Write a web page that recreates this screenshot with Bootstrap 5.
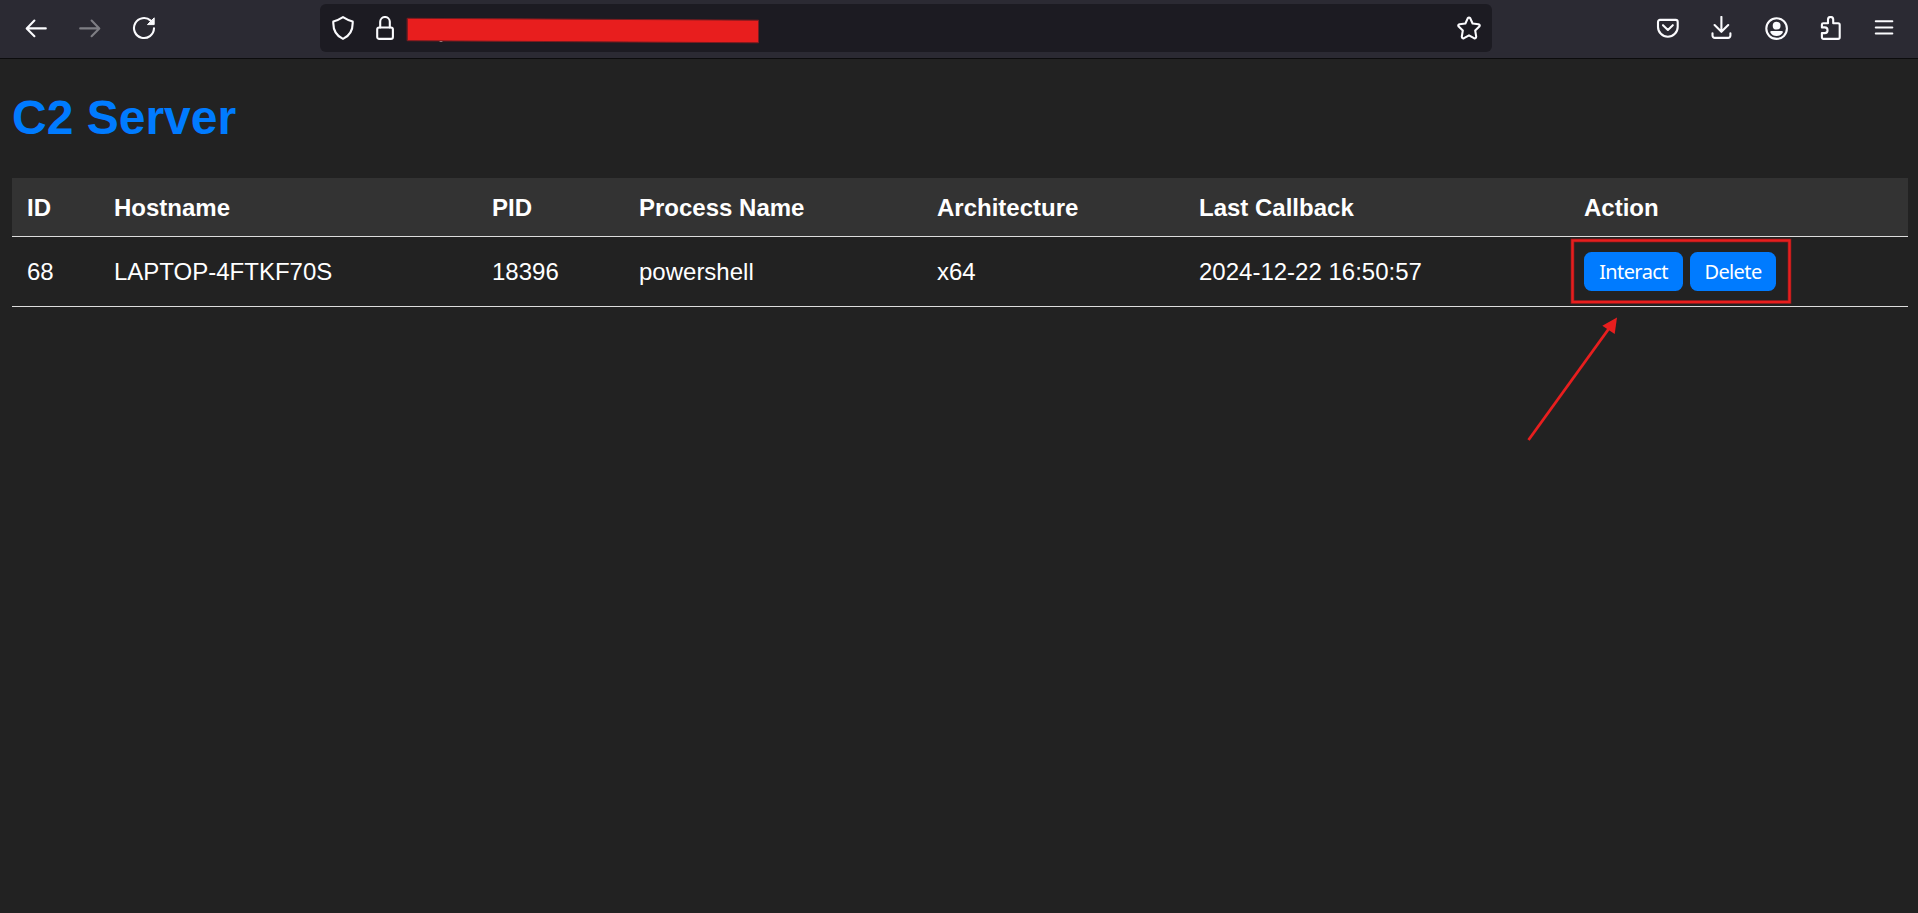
<!DOCTYPE html>
<html lang="en">
<head>
<meta charset="utf-8">
<meta name="viewport" content="width=device-width, initial-scale=1">
<title>C2 Server</title>
<link href="https://cdn.jsdelivr.net/npm/bootstrap@5.3.0/dist/css/bootstrap.min.css" rel="stylesheet">
<style>
  body { background: #222; color: #fff; font-family: "Liberation Sans", Arial, sans-serif; font-size: 24px; min-height: 100vh; }
  .browser-bar { height: 59px; background: #2b2a33; border-bottom: 1px solid #0c0c0d; padding: 4px 22px 6px 24px; }
  .browser-bar svg { width: 24px; height: 24px; display: block; flex: none; fill: none; stroke: #fbfbfe; stroke-width: 2.1; stroke-linecap: round; stroke-linejoin: round; }
  .tool-group { gap: 30px; }
  .url-field { width: 1172px; height: 48px; margin-left: 164px; background: #1c1b22; border-radius: 6px; padding: 0 11px; }
  .url-field .site-icons { gap: 18px; }
  .browser-bar .redaction { width: 356px; height: 32px; margin-left: 8px; stroke: #7c1b20; stroke-width: 1; stroke-linejoin: miter; }
  .page-body { padding: 0 10px 0 12px; }
  h1 { color: #007bff; font-size: 48px; line-height: 56px; font-weight: 700; margin: 0; padding: 31px 0 32px; }
  .agents { --bs-table-bg: transparent; --bs-table-color: #fff; color: #fff; table-layout: fixed; width: 1896px; border-collapse: separate; border-spacing: 0; margin: 0; }
  .agents > :not(caption) > * > * { padding: 0 15px; border-bottom: 1px solid #ddd; white-space: nowrap; line-height: 28px; }
  .agents > thead > tr > th { height: 59px; padding-top: 2px; background: #333; vertical-align: middle; }
  .agents > tbody > tr > td { height: 70px; vertical-align: middle; }
  .btn-agent { --bs-btn-bg: #007bff; --bs-btn-color: #fff; --bs-btn-hover-bg: #0069d9; --bs-btn-hover-color: #fff; border: 0; border-radius: 7.5px; height: 39px; padding: 0; font: 20px/39px "Noto Sans", sans-serif; letter-spacing: -.6px; }
  .btn-interact { width: 99px; }
  .btn-delete { width: 86px; }
  .callout-mark { left: -50px; top: 0; width: 280px; height: 210px; pointer-events: none; fill: none; overflow: visible; }
</style>
</head>
<body>
<nav class="browser-bar d-flex align-items-center">
  <div class="tool-group d-flex">
    <svg viewBox="0 0 24 24"><path d="M10.4 4.6 2.7 12.4l7.7 7.8M2.8 12.4h19"/></svg>
    <svg viewBox="0 0 24 24" opacity=".4"><path d="M13.6 4.6l7.7 7.8-7.7 7.8M21.2 12.4h-19"/></svg>
    <svg viewBox="0 0 24 24"><path d="M22 12.3A10 10 0 1 1 18.7 4.6"/><path d="M22.2 2.2v6.4h-6.4z" fill="#fbfbfe" stroke-width="1"/></svg>
  </div>
  <div class="url-field d-flex align-items-center">
    <div class="site-icons d-flex">
      <svg viewBox="0 0 24 24"><path d="M12 1.1C15 3 18.300 4.700 21.700 5.500C22.100 14 18.800 19.800 12 22.900C5.200 19.800 1.900 14 2.300 5.500C5.700 4.700 9 3 12 1.100z"/></svg>
      <svg viewBox="0 0 24 24"><rect x="4.200" y="11.500" width="15.700" height="11.400" rx="2"/><path d="M7.200 11.500V5.800a4.800 4.800 0 0 1 9.600 0v5.700"/></svg>
    </div>
    <svg class="redaction" viewBox="0 0 356 32"><path d="M35 29.500h2" stroke="#aaa"/><path d="M2.500 6.300 353.500 8.200V30.800L2.500 28.700z" fill="#e81e1e"/></svg>
    <svg class="ms-auto" viewBox="0 0 24 24"><path d="M10.700 2.300Q12 .9 13.300 2.300L15.600 7.500 21.400 8.200Q23.500 8.800 22.300 10.600L18.200 14.600 19.200 20.600Q19 22.800 17 22.200L12 19.400 7 22.200Q5 22.800 4.800 20.600L5.800 14.600 1.700 10.600Q.5 8.800 2.600 8.200L8.400 7.500z"/></svg>
  </div>
  <div class="tool-group d-flex ms-auto">
    <svg viewBox="0 0 24 24"><path d="M4 3.900h15.700a2 2 0 0 1 2 2v5a9.850 9.850 0 0 1-19.700 0v-5a2 2 0 0 1 2-2zM7 9.200l4.900 4.700 4.900-4.700"/></svg>
    <svg viewBox="0 0 24 24"><path d="M11.400.9V15.500M4.600 9l6.800 6.800L18.200 9M2.500 17.200v2.400a2.300 2.300 0 0 0 2.300 2.300h13.300a2.300 2.300 0 0 0 2.300-2.300v-2.400"/></svg>
    <svg viewBox="0 0 24 24"><circle cx="12.600" cy="12.600" r="10.300"/><g fill="#fbfbfe" stroke="none"><circle cx="12.600" cy="9.700" r="3.900"/><path d="M7.500 15.100h10.200q1.600 0 1.100 1.300c-1.200 2.400-3.500 3.500-6.200 3.500s-5-1.100-6.200-3.500q-.5-1.300 1.100-1.300z"/></g></svg>
    <svg viewBox="0 0 24 24"><path d="M3.900 11.400V8.600a1.400 1.400 0 0 1 1.400-1.400H10V3.600a2.600 2.600 0 0 1 5.200 0v3.600h4.900a1.600 1.600 0 0 1 1.600 1.600v12.500a1.600 1.600 0 0 1-1.600 1.600H5.500a1.600 1.600 0 0 1-1.600-1.600v-4.200h2.800a2.850 2.850 0 0 0 0-5.700z"/></svg>
    <svg viewBox="0 0 24 24"><path d="M3.800 5.200h16.500M3.800 11.500h16.500M3.800 17.500h16.500"/></svg>
  </div>
</nav>

<main class="page-body">
  <h1>C2 Server</h1>
  <table class="table agents">
    <colgroup>
      <col style="width:87px"><col style="width:378px"><col style="width:147px"><col style="width:298px"><col style="width:262px"><col style="width:385px"><col>
    </colgroup>
    <thead>
      <tr><th>ID</th><th>Hostname</th><th>PID</th><th>Process Name</th><th>Architecture</th><th>Last Callback</th><th>Action</th></tr>
    </thead>
    <tbody>
      <tr>
        <td>68</td><td>LAPTOP-4FTKF70S</td><td>18396</td><td>powershell</td><td>x64</td><td>2024-12-22 16:50:57</td>
        <td class="position-relative">
          <div class="d-flex" style="gap:7px">
            <button type="button" class="btn btn-agent btn-interact">Interact</button>
            <button type="button" class="btn btn-agent btn-delete">Delete</button>
          </div>
          <svg class="callout-mark position-absolute" viewBox="1519 237 280 210">
            <g transform="translate(0 0)">
              <rect x="1572.500" y="240.500" width="217" height="61.500" stroke="#971c1d" stroke-width="3.600"/>
              <rect x="1572.500" y="240.500" width="217" height="61.500" stroke="#e81e1e" stroke-width="2.200"/>
              <line x1="1528.500" y1="440" x2="1609" y2="328.500" stroke="#e81e1e" stroke-width="2.800"/>
              <polygon points="1617,317.500 1602.300,325.800 1614.700,334" fill="#e81e1e"/>
            </g>
          </svg>
        </td>
      </tr>
    </tbody>
  </table>
</main>
<script src="https://cdn.jsdelivr.net/npm/bootstrap@5.3.0/dist/js/bootstrap.bundle.min.js"></script>
</body>
</html>
